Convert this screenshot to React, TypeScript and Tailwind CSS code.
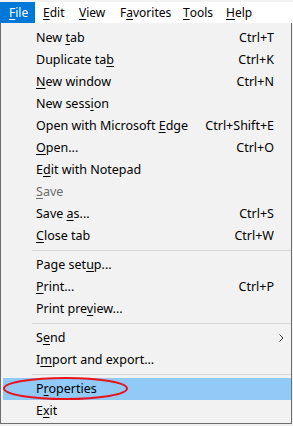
import React from 'react';

type Item =
  | { kind: 'item'; pre: string; key?: string; post?: string; shortcut?: string; disabled?: boolean; active?: boolean; submenu?: boolean }
  | { kind: 'sep' };

const items: Item[] = [
  { kind: 'item', pre: 'New ', key: 't', post: 'ab', shortcut: 'Ctrl+T' },
  { kind: 'item', pre: 'Duplicate ta', key: 'b', shortcut: 'Ctrl+K' },
  { kind: 'item', pre: '', key: 'N', post: 'ew window', shortcut: 'Ctrl+N' },
  { kind: 'item', pre: 'New sess', key: 'i', post: 'on' },
  { kind: 'item', pre: 'Open with Microsoft ', key: 'E', post: 'dge', shortcut: 'Ctrl+Shift+E' },
  { kind: 'item', pre: '', key: 'O', post: 'pen...', shortcut: 'Ctrl+O' },
  { kind: 'item', pre: 'E', key: 'd', post: 'it with Notepad' },
  { kind: 'item', pre: '', key: 'S', post: 'ave', disabled: true },
  { kind: 'item', pre: 'Save ', key: 'a', post: 's...', shortcut: 'Ctrl+S' },
  { kind: 'item', pre: '', key: 'C', post: 'lose tab', shortcut: 'Ctrl+W' },
  { kind: 'sep' },
  { kind: 'item', pre: 'Page set', key: 'u', post: 'p...' },
  { kind: 'item', pre: '', key: 'P', post: 'rint...', shortcut: 'Ctrl+P' },
  { kind: 'item', pre: 'Print pre', key: 'v', post: 'iew...' },
  { kind: 'sep' },
  { kind: 'item', pre: 'S', key: 'e', post: 'nd', submenu: true },
  { kind: 'item', pre: 'I', key: 'm', post: 'port and export...' },
  { kind: 'sep' },
  { kind: 'item', pre: 'P', key: 'r', post: 'operties', active: true },
  { kind: 'item', pre: 'E', key: 'x', post: 'it' },
];

const menus = [
  { key: 'F', rest: 'ile', w: 'w-[35px] pl-[9px]', open: true },
  { key: 'E', rest: 'dit', w: 'w-[36px] pl-[8px]' },
  { key: 'V', rest: 'iew', w: 'w-[41px] pl-[8px]' },
  { pre: 'F', key: 'a', rest: 'vorites', w: 'w-[63px] pl-[8px]' },
  { key: 'T', rest: 'ools', w: 'w-[43px] pl-[8px]' },
  { key: 'H', rest: 'elp', w: 'w-[45px] pl-[8px]' },
];

export default function App() {
  return (
    <div className="relative w-[293px] h-[426px] bg-[#f0f0f0] overflow-hidden text-black select-none" style={{ fontFamily: '"Segoe UI", "Noto Sans", sans-serif' }}>
      {/* Menu bar */}
      <div className="h-[23px] bg-white border-t-[2px] border-[#f3f3f3] flex items-stretch text-[12px]">
        {menus.map((m) => (
          <div
            key={m.rest}
            className={`${m.w} flex items-center leading-none ${m.open ? 'bg-[#0078d7] text-white' : ''}`}
          >
            {m.pre}
            <u className="underline underline-offset-2">{m.key}</u>
            {m.rest}
          </div>
        ))}
      </div>

      {/* File dropdown */}
      <div className="w-[292px] bg-[#f2f2f2] border-x border-b border-[#6e6e6e] pt-[4px] pb-[1px] text-[12.5px]">
        {items.map((it, i) =>
          it.kind === 'sep' ? (
            <div key={i} className="h-[7px] flex items-center pl-[31px]">
              <div className="h-px w-full bg-[#d7d7d7]" />
            </div>
          ) : (
            <div
              key={i}
              className={`h-[22px] ml-[2px] flex items-center pl-[33px] ${it.active ? 'bg-[#91c9f7]' : ''} ${it.disabled ? 'text-[#6d6d6d]' : ''}`}
            >
              <span className="flex-1 whitespace-nowrap">
                {it.pre}
                {it.key && <u className="underline underline-offset-2">{it.key}</u>}
                {it.post}
              </span>
              {it.shortcut && <span className="whitespace-nowrap">{it.shortcut}</span>}
              <span className="w-[17px] flex items-center justify-end pr-[7px]">
                {it.submenu && (
                  <svg width="5" height="8" viewBox="0 0 5 8">
                    <path d="M0.5 0.5 L4 4 L0.5 7.5" fill="none" stroke="#333" strokeWidth="1" />
                  </svg>
                )}
              </span>
            </div>
          ),
        )}
      </div>

      {/* Annotation */}
      <svg className="absolute left-[2px] top-[376px]" width="127" height="25" viewBox="0 0 127 25">
        <ellipse cx="63.5" cy="12.5" rx="61.5" ry="10.5" fill="none" stroke="#e8141b" strokeWidth="2" />
      </svg>
    </div>
  );
}
